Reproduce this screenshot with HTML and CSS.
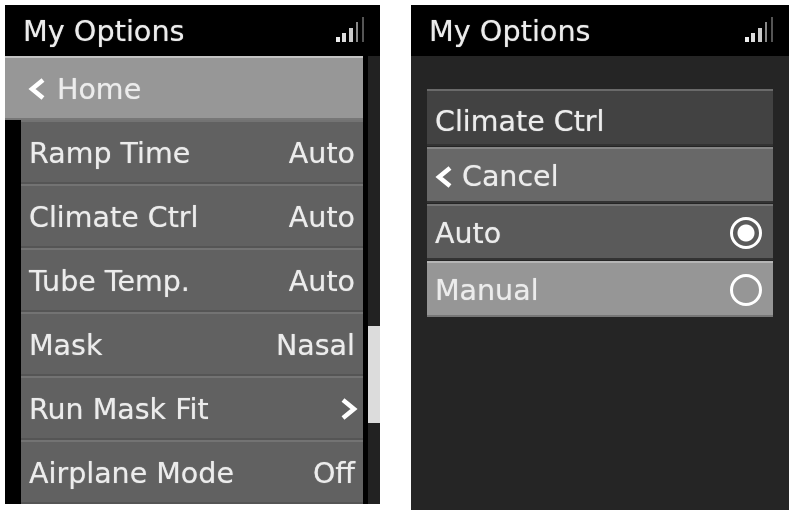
FILE: index.html

```html
<!DOCTYPE html>
<html lang="en">
<head>
    <meta charset="UTF-8">
    <meta name="viewport" content="width=device-width, initial-scale=1.0">
    <title>My Options</title>
    <link rel="stylesheet" href="styles.css">
</head>
<body>
    <div class="screens">
        <div class="screen screen-list">
            <div class="header">
                <span>My Options</span>
                <svg class="signal" width="32" height="26" viewBox="0 0 32 26">
                    <rect x="2" y="20" width="4" height="5" fill="#eee"/>
                    <rect x="8" y="16" width="4" height="9" fill="#ddd"/>
                    <rect x="15" y="11" width="4" height="14" fill="#ccc"/>
                    <rect x="22" y="5" width="2" height="20" fill="#888"/>
                    <rect x="28" y="0" width="2" height="25" fill="#555"/>
                </svg>
            </div>
            <div class="list-body">
                <div class="list-main">
                    <div class="row row-home">
                        <svg class="chevron" width="18" height="22" viewBox="0 0 18 22"><path d="M15 2 4 11l11 9" fill="none" stroke="#fff" stroke-width="4.5"/></svg>
                        <span>Home</span>
                    </div>
                    <div class="rows">
                        <div class="row"><span>Ramp Time</span><span>Auto</span></div>
                        <div class="row"><span>Climate Ctrl</span><span>Auto</span></div>
                        <div class="row"><span>Tube Temp.</span><span>Auto</span></div>
                        <div class="row"><span>Mask</span><span>Nasal</span></div>
                        <div class="row">
                            <span>Run Mask Fit</span>
                            <svg class="chevron chevron-right" width="18" height="22" viewBox="0 0 18 22"><path d="M3 2l11 9-11 9" fill="none" stroke="#fff" stroke-width="4.5"/></svg>
                        </div>
                        <div class="row"><span>Airplane Mode</span><span>Off</span></div>
                    </div>
                </div>
                <div class="scrollbar"><div class="thumb"></div></div>
            </div>
        </div>

        <div class="screen screen-dialog">
            <div class="header">
                <span>My Options</span>
                <svg class="signal" width="32" height="26" viewBox="0 0 32 26">
                    <rect x="2" y="20" width="4" height="5" fill="#eee"/>
                    <rect x="8" y="16" width="4" height="9" fill="#ddd"/>
                    <rect x="15" y="11" width="4" height="14" fill="#ccc"/>
                    <rect x="22" y="5" width="2" height="20" fill="#888"/>
                    <rect x="28" y="0" width="2" height="25" fill="#555"/>
                </svg>
            </div>
            <div class="dialog">
                <div class="opt opt-title"><span>Climate Ctrl</span></div>
                <div class="opt opt-cancel">
                    <svg class="chevron" width="18" height="22" viewBox="0 0 18 22"><path d="M15 2 4 11l11 9" fill="none" stroke="#fff" stroke-width="4.5"/></svg>
                    <span>Cancel</span>
                </div>
                <div class="opt opt-plain"><span>Auto</span><span class="radio radio-on"></span></div>
                <div class="opt opt-active"><span>Manual</span><span class="radio"></span></div>
            </div>
        </div>
    </div>
</body>
</html>
```

FILE: styles.css

```css
* {
    margin: 0;
    padding: 0;
    box-sizing: border-box;
}

body {
    background: #fff;
    font-family: "DejaVu Sans", sans-serif;
    color: #ececec;
    text-shadow: 0 0 1px rgba(255,255,255,0.6);
}

.screens {
    display: flex;
    gap: 31px;
    padding: 5px 8px 0 5px;
    filter: blur(0.7px);
}

.screen {
    background: #000;
    display: flex;
    flex-direction: column;
}

.screen-list {
    width: 375px;
    height: 499px;
}

.screen-dialog {
    width: 378px;
    height: 505px;
    background: #252525;
}

.header {
    height: 51px;
    flex-shrink: 0;
    background: #000;
    display: flex;
    justify-content: space-between;
    align-items: center;
    padding: 0 14px 0 18px;
    font-size: 28.7px;
}

.signal {
    margin-bottom: 2px;
}

.list-body {
    flex: 1;
    display: flex;
    min-height: 0;
    overflow: hidden;
}

.list-main {
    width: 358px;
    display: flex;
    flex-direction: column;
}

.row {
    height: 64px;
    flex-shrink: 0;
    display: flex;
    justify-content: space-between;
    align-items: center;
    padding: 2px 8px 0 8px;
    background: #616161;
    border-top: 2px solid #737373;
    border-bottom: 2px solid #555;
    font-size: 28.5px;
}

.row-home {
    justify-content: flex-start;
    gap: 11px;
    padding-left: 23px;
    background: #979797;
    border-top-color: #c2c2c2;
    border-bottom-color: #777;
}

.rows {
    margin-left: 16px;
}

.chevron-right {
    margin-right: -3px;
}

.scrollbar {
    width: 12px;
    margin-left: 5px;
    background: #222;
    position: relative;
}

.thumb {
    position: absolute;
    top: 270px;
    left: 0;
    width: 12px;
    height: 97px;
    background: #dcdcdc;
}

.dialog {
    margin: 33px 16px 0;
    display: flex;
    flex-direction: column;
    gap: 1px;
}

.opt {
    height: 56px;
    display: flex;
    justify-content: space-between;
    align-items: center;
    padding: 2px 11px 0 8px;
    font-size: 28.5px;
    border-top: 2px solid #777;
    border-bottom: 2px solid #333;
}

.opt-title {
    height: 57px;
    padding-top: 7px;
    background: #424242;
    border-top-color: #6a6a6a;
}

.opt-cancel {
    justify-content: flex-start;
    gap: 9px;
    padding-top: 3px;
    background: #686868;
    border-top-color: #858585;
}

.opt-plain {
    background: #5a5a5a;
    border-top-color: #747474;
}

.opt-active {
    background: #969696;
    border-top-color: #b5b5b5;
    border-bottom-color: #777;
}

.radio {
    width: 32px;
    height: 32px;
    border: 3px solid #fff;
    border-radius: 50%;
}

.radio-on {
    background: radial-gradient(circle, #fff 0 8px, transparent 9px);
}
```
